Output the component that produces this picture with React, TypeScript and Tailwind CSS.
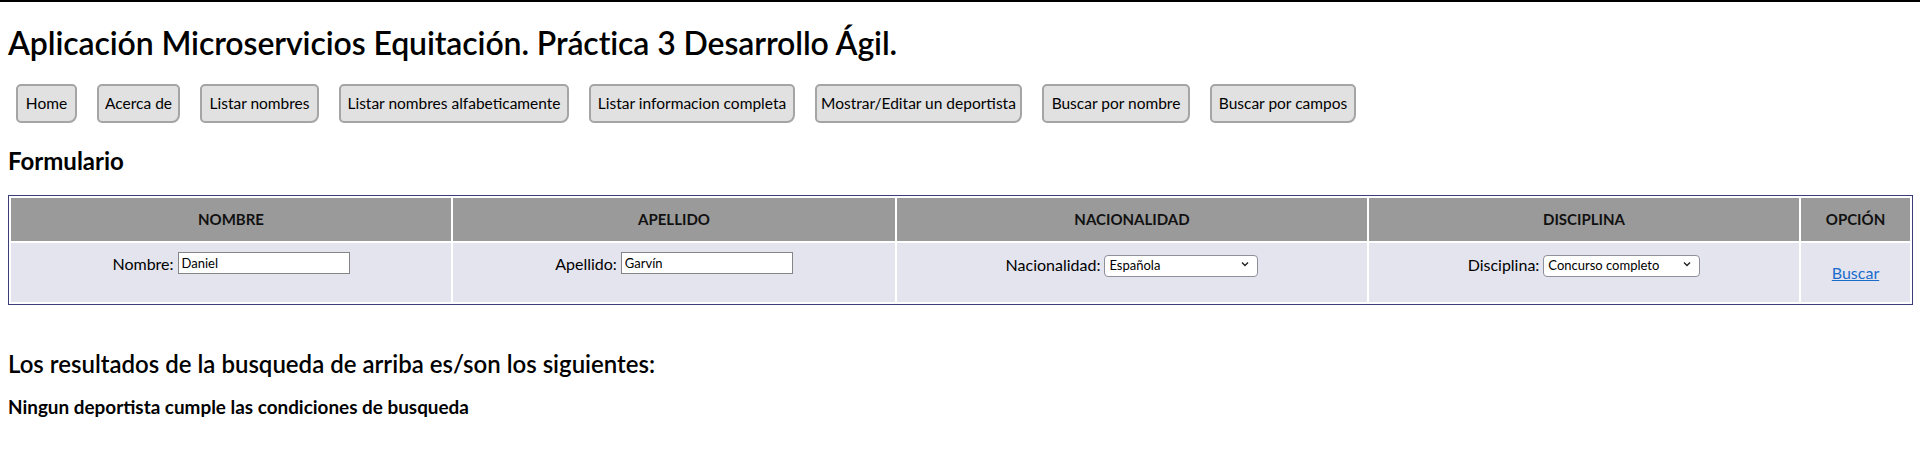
import React from "react";

const botones = [
  { label: "Home", w: "w-[61px]" },
  { label: "Acerca de", w: "w-[83px]" },
  { label: "Listar nombres", w: "w-[119px]" },
  { label: "Listar nombres alfabeticamente", w: "w-[230px]" },
  { label: "Listar informacion completa", w: "w-[206px]" },
  { label: "Mostrar/Editar un deportista", w: "w-[207px]" },
  { label: "Buscar por nombre", w: "w-[148px]" },
  { label: "Buscar por campos", w: "w-[146px]" },
];

const Chevron = () => (
  <svg
    className="pointer-events-none absolute right-[8px] top-1/2 -translate-y-1/2"
    width="10"
    height="10"
    viewBox="0 0 10 10"
  >
    <path d="M2 3.5 L5 6.5 L8 3.5" fill="none" stroke="#222" strokeWidth="1.4" />
  </svg>
);

const Campo = ({ label, value }: { label: string; value: string }) => (
  <div className="flex items-center justify-center gap-[4px]">
    <span className="text-[16px] leading-[21px]">{label}:</span>
    <input
      defaultValue={value}
      className="h-[22px] w-[172px] border border-[#858585] bg-white px-[3px] text-[13px] text-black outline-none"
    />
  </div>
);

const Selector = ({
  label,
  value,
  opciones,
  w,
}: {
  label: string;
  value: string;
  opciones: string[];
  w: string;
}) => (
  <div className="flex items-center justify-center gap-[4px]">
    <span className="text-[16px] leading-[21px]">{label}:</span>
    <div className={`relative ${w}`}>
      <select
        defaultValue={value}
        className="h-[22px] w-full appearance-none rounded-[4px] border border-[#8f8f9d] bg-white pl-[4px] pr-[20px] text-[13px] text-black outline-none"
      >
        {opciones.map((o) => (
          <option key={o}>{o}</option>
        ))}
      </select>
      <Chevron />
    </div>
  </div>
);

export default function App() {
  return (
    <div className="min-h-screen border-t-2 border-black bg-white px-2 font-['Lato','Noto_Sans',sans-serif] text-black">
      <h1 className="mt-[22px] text-[32px] leading-[38px] font-semibold tracking-[-0.1px]">
        Aplicación Microservicios Equitación. Práctica 3 Desarrollo Ágil.
      </h1>

      {/* barra de navegacion */}
      <nav className="mt-[22px] flex gap-[20px] pl-[8px]">
        {botones.map((b) => (
          <button
            key={b.label}
            className={`${b.w} h-[39px] rounded-[5px] rounded-br-[8px] border-2 border-[#a5a5a5] bg-[#e1e1e1] text-[15.5px] text-black`}
          >
            {b.label}
          </button>
        ))}
      </nav>

      <h2 className="mt-[23px] text-[24px] leading-[29px] font-bold">Formulario</h2>

      <table className="mt-[20px] w-full table-fixed border-separate border-spacing-[2px] border border-[#3c3c78]">
        <colgroup>
          <col className="w-[440px]" />
          <col className="w-[442px]" />
          <col className="w-[470px]" />
          <col className="w-[430px]" />
          <col className="w-[109px]" />
        </colgroup>
        <thead>
          <tr className="bg-[#9a9a9a]">
            {["NOMBRE", "APELLIDO", "NACIONALIDAD", "DISCIPLINA", "OPCIÓN"].map((h) => (
              <th key={h} className="h-[43px] text-center text-[15px] font-bold text-[#111]">
                {h}
              </th>
            ))}
          </tr>
        </thead>
        <tbody>
          <tr className="bg-[#e4e4ee]">
            <td className="h-[59px] pt-[9px] align-top">
              <Campo label="Nombre" value="Daniel" />
            </td>
            <td className="pt-[9px] align-top">
              <Campo label="Apellido" value="Garvín" />
            </td>
            <td className="pt-[9px] align-top">
              <Selector
                label="Nacionalidad"
                value="Española"
                opciones={["Española", "Francesa", "Alemana", "Británica"]}
                w="w-[154px]"
              />
            </td>
            <td className="pt-[9px] align-top">
              <Selector
                label="Disciplina"
                value="Concurso completo"
                opciones={["Concurso completo", "Doma clásica", "Salto"]}
                w="w-[157px]"
              />
            </td>
            <td className="text-center align-middle">
              <a href="#" className="text-[16px] text-[#1a6ccc] underline">
                Buscar
              </a>
            </td>
          </tr>
        </tbody>
      </table>

      <h2 className="mt-[44px] text-[24px] leading-[29px] font-semibold">
        Los resultados de la busqueda de arriba es/son los siguientes:
      </h2>
      <p className="mt-[17px] text-[18.9px] leading-[23px] font-bold">
        Ningun deportista cumple las condiciones de busqueda
      </p>
    </div>
  );
}
